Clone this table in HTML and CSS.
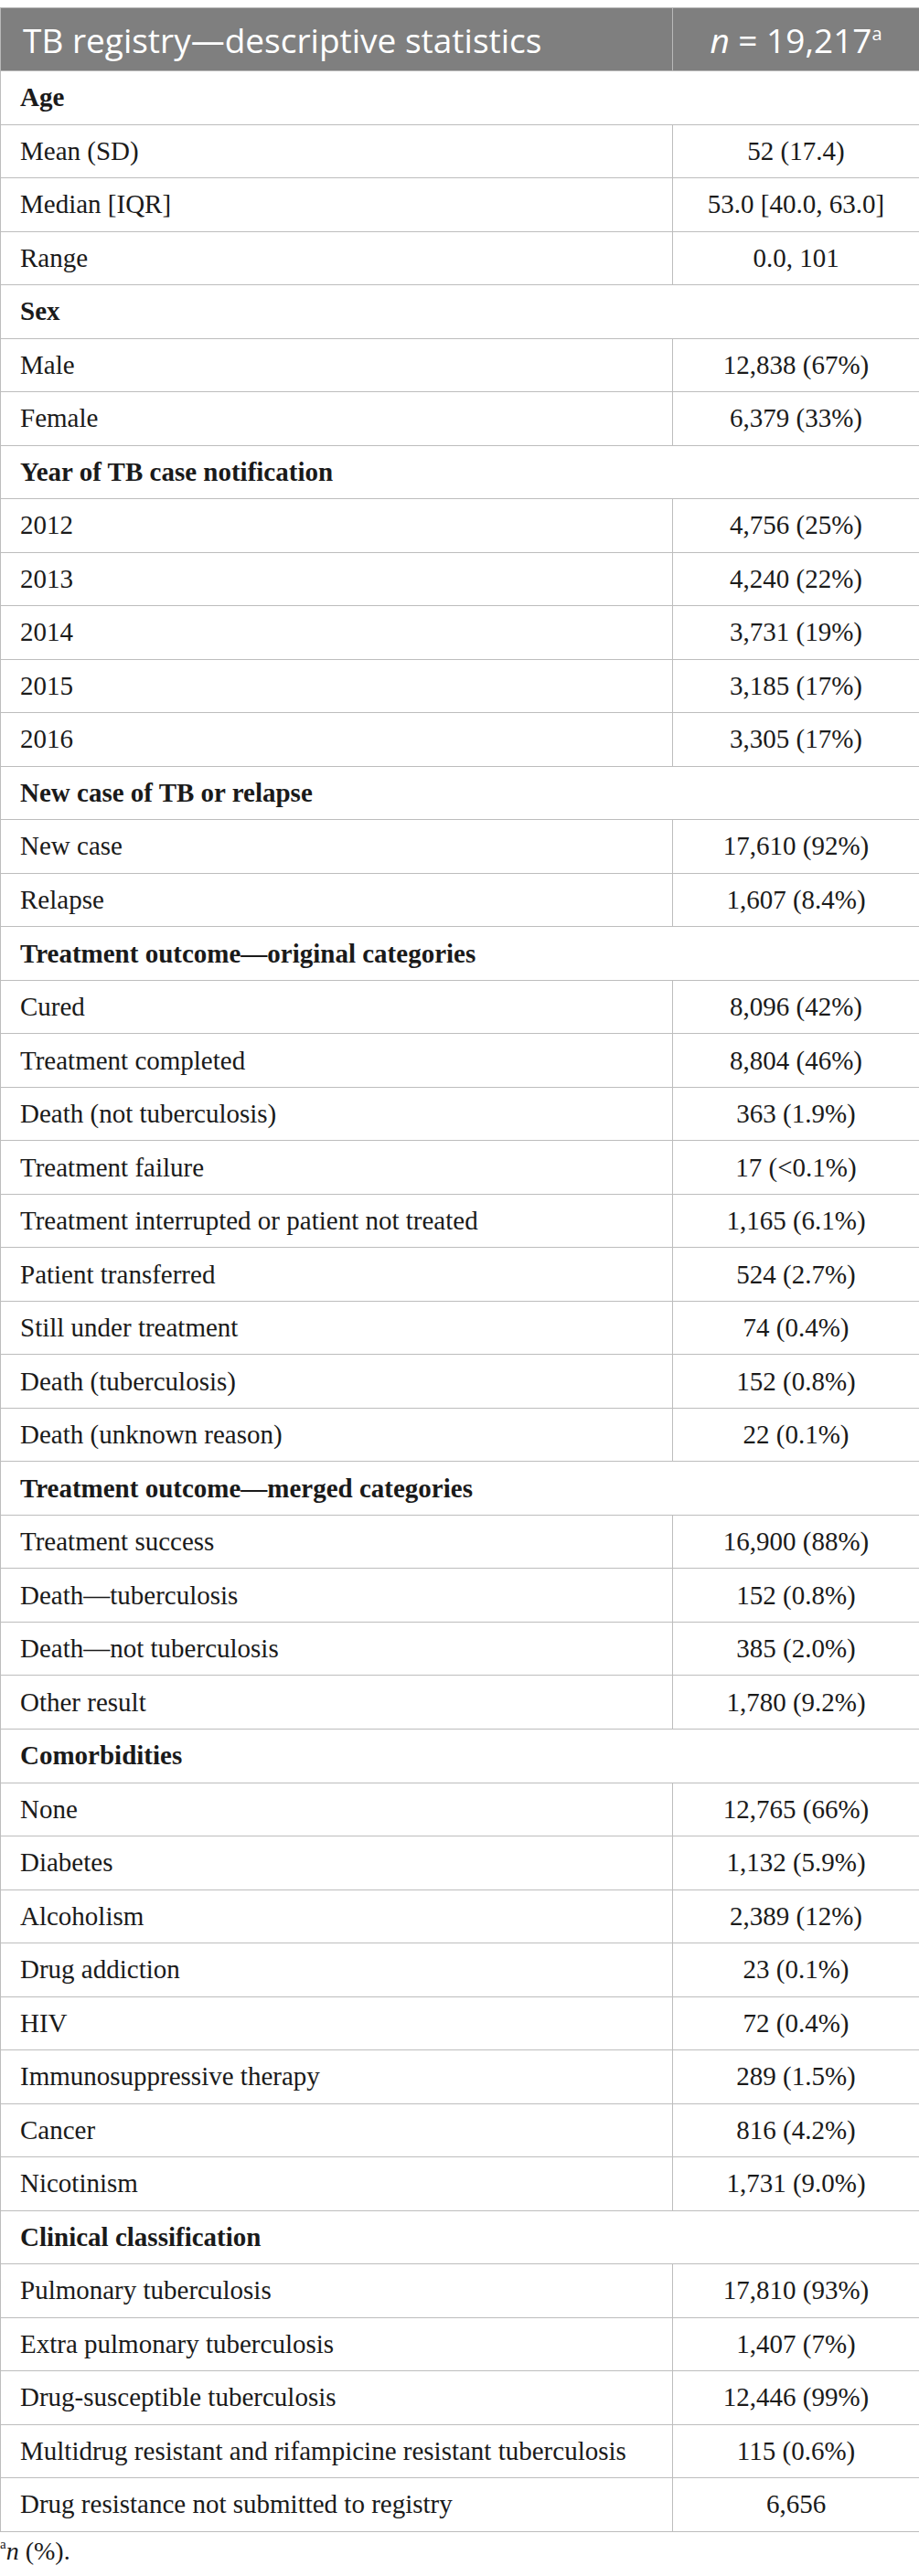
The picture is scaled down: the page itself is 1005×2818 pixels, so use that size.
FILE: index.html
```html
<!DOCTYPE html>
<html lang="en">
<head>
<meta charset="utf-8">
<title>TB registry—descriptive statistics</title>
<link rel="stylesheet" href="styles.css">
</head>
<body>
<div class="wrap">
<table class="stats">
  <colgroup><col class="c-label"><col class="c-value"></colgroup>
  <thead>
    <tr><th class="h-label">TB registry—descriptive statistics</th><th class="h-value"><i>n</i> = 19,217<sup>a</sup></th></tr>
  </thead>
  <tbody>
    <tr class="sec"><td colspan="2">Age</td></tr>
    <tr><td>Mean (SD)</td><td class="v">52 (17.4)</td></tr>
    <tr><td>Median [IQR]</td><td class="v">53.0 [40.0, 63.0]</td></tr>
    <tr><td>Range</td><td class="v">0.0, 101</td></tr>
    <tr class="sec"><td colspan="2">Sex</td></tr>
    <tr><td>Male</td><td class="v">12,838 (67%)</td></tr>
    <tr><td>Female</td><td class="v">6,379 (33%)</td></tr>
    <tr class="sec"><td colspan="2">Year of TB case notification</td></tr>
    <tr><td>2012</td><td class="v">4,756 (25%)</td></tr>
    <tr><td>2013</td><td class="v">4,240 (22%)</td></tr>
    <tr><td>2014</td><td class="v">3,731 (19%)</td></tr>
    <tr><td>2015</td><td class="v">3,185 (17%)</td></tr>
    <tr><td>2016</td><td class="v">3,305 (17%)</td></tr>
    <tr class="sec"><td colspan="2">New case of TB or relapse</td></tr>
    <tr><td>New case</td><td class="v">17,610 (92%)</td></tr>
    <tr><td>Relapse</td><td class="v">1,607 (8.4%)</td></tr>
    <tr class="sec"><td colspan="2">Treatment outcome—original categories</td></tr>
    <tr><td>Cured</td><td class="v">8,096 (42%)</td></tr>
    <tr><td>Treatment completed</td><td class="v">8,804 (46%)</td></tr>
    <tr><td>Death (not tuberculosis)</td><td class="v">363 (1.9%)</td></tr>
    <tr><td>Treatment failure</td><td class="v">17 (&lt;0.1%)</td></tr>
    <tr><td>Treatment interrupted or patient not treated</td><td class="v">1,165 (6.1%)</td></tr>
    <tr><td>Patient transferred</td><td class="v">524 (2.7%)</td></tr>
    <tr><td>Still under treatment</td><td class="v">74 (0.4%)</td></tr>
    <tr><td>Death (tuberculosis)</td><td class="v">152 (0.8%)</td></tr>
    <tr><td>Death (unknown reason)</td><td class="v">22 (0.1%)</td></tr>
    <tr class="sec"><td colspan="2">Treatment outcome—merged categories</td></tr>
    <tr><td>Treatment success</td><td class="v">16,900 (88%)</td></tr>
    <tr><td>Death—tuberculosis</td><td class="v">152 (0.8%)</td></tr>
    <tr><td>Death—not tuberculosis</td><td class="v">385 (2.0%)</td></tr>
    <tr><td>Other result</td><td class="v">1,780 (9.2%)</td></tr>
    <tr class="sec"><td colspan="2">Comorbidities</td></tr>
    <tr><td>None</td><td class="v">12,765 (66%)</td></tr>
    <tr><td>Diabetes</td><td class="v">1,132 (5.9%)</td></tr>
    <tr><td>Alcoholism</td><td class="v">2,389 (12%)</td></tr>
    <tr><td>Drug addiction</td><td class="v">23 (0.1%)</td></tr>
    <tr><td>HIV</td><td class="v">72 (0.4%)</td></tr>
    <tr><td>Immunosuppressive therapy</td><td class="v">289 (1.5%)</td></tr>
    <tr><td>Cancer</td><td class="v">816 (4.2%)</td></tr>
    <tr><td>Nicotinism</td><td class="v">1,731 (9.0%)</td></tr>
    <tr class="sec"><td colspan="2">Clinical classification</td></tr>
    <tr><td>Pulmonary tuberculosis</td><td class="v">17,810 (93%)</td></tr>
    <tr><td>Extra pulmonary tuberculosis</td><td class="v">1,407 (7%)</td></tr>
    <tr><td>Drug-susceptible tuberculosis</td><td class="v">12,446 (99%)</td></tr>
    <tr><td>Multidrug resistant and rifampicine resistant tuberculosis</td><td class="v">115 (0.6%)</td></tr>
    <tr><td>Drug resistance not submitted to registry</td><td class="v">6,656</td></tr>
  </tbody>
</table>
<p class="note"><sup>a</sup><i>n</i> (%).</p>
</div>
</body>
</html>
```
FILE: styles.css
```css
html, body {
  margin: 0;
  padding: 0;
  background: #ffffff;
}
.wrap {
  padding-top: 8px;
}
.stats {
  width: 1005px;
  border-collapse: collapse;
  table-layout: fixed;
  font-family: "Liberation Serif", "Times New Roman", serif;
  font-size: 29px;
  color: #1a1a1a;
}
.c-label { width: 735px; }
.c-value { width: 270px; }
.stats th {
  background: #7f7f7f;
  color: #ffffff;
  font-family: "Open Sans", "Liberation Sans", sans-serif;
  font-weight: 400;
  font-size: 37px;
  height: 68px;
  padding: 0;
  border: 1px solid #b8b8b8;
  white-space: nowrap;
}
.stats th.h-label {
  text-align: left;
  padding-left: 24px;
}
.stats th.h-value {
  text-align: center;
  border-left: 1px solid #a8a8a8;
}
.stats th sup {
  font-size: 20px;
  vertical-align: 14px;
  line-height: 0;
}
.stats td {
  height: 57.53px;
  padding: 0 0 0 21px;
  border: 1px solid #bdbdbd;
  vertical-align: middle;
  white-space: nowrap;
}
.stats td.v {
  text-align: center;
  padding: 0;
}
.stats tr.sec td {
  font-weight: 700;
}
.note {
  margin: 5px 0 0 0;
  font-family: "Liberation Serif", "Times New Roman", serif;
  font-size: 28px;
  color: #1a1a1a;
}
.note sup {
  font-size: 15px;
  vertical-align: 12px;
  line-height: 0;
}
```
